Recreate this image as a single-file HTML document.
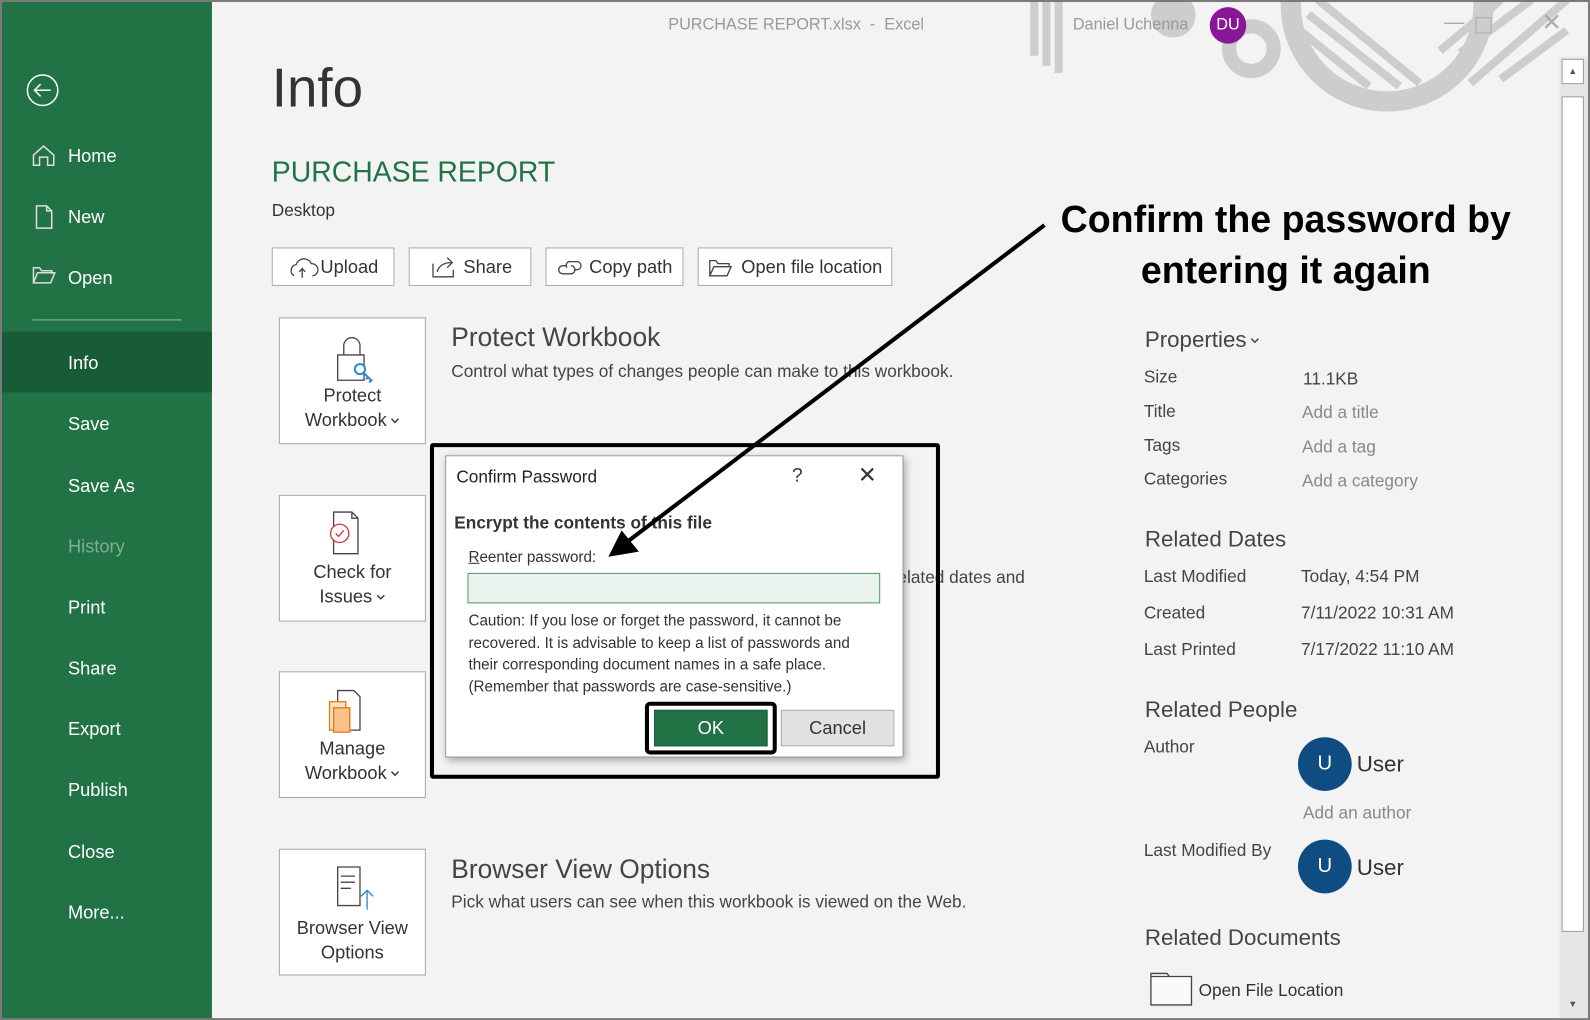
<!DOCTYPE html>
<html><head><meta charset="utf-8"><style>
html,body{margin:0;padding:0;width:1590px;height:1020px;overflow:hidden;background:#f3f3f3}
#w{position:absolute;left:0;top:0;width:1568px;height:1006px;transform:scale(1.01403);transform-origin:0 0;font-family:"Liberation Sans",sans-serif;background:#f3f3f3}
.a{position:absolute;white-space:nowrap;line-height:1}
.side{position:absolute;left:0;top:0;width:209px;height:1006px;background:#217346}
.si{position:absolute;left:67px;color:#fff;font-size:18px;line-height:1}
.btn{position:absolute;top:244px;height:38px;background:#fff;border:1px solid #ababab;box-sizing:border-box;font-size:18px;color:#333;line-height:36px}
.tile{position:absolute;left:275px;width:145px;height:125px;background:#fff;border:1px solid #a6a6a6;box-sizing:border-box;text-align:center;font-size:18px;color:#333}
.tile .t{position:absolute;left:0;right:0;line-height:24px}
.h{font-size:26px;color:#444}
.d{font-size:17px;color:#444}
.pl{font-size:17px;color:#444}
.pv{font-size:17px;color:#444}
.gr{color:#888}
.cv{display:inline-block;width:9px;height:6px;margin-left:4px;vertical-align:middle}
</style></head><body><div id="w">
<svg style="position:absolute;left:0;top:0" width="1568" height="1006">
<g fill="none" stroke="#cdcdcd">
<circle cx="1368" cy="5" r="95" stroke-width="20"/>
<circle cx="1234" cy="48" r="22" stroke-width="14"/>
</g>
<circle cx="1157" cy="15" r="22" fill="#cdcdcd"/>
<g stroke="#cdcdcd" stroke-width="8">
<line x1="1300" y1="0" x2="1400" y2="82"/><line x1="1290" y1="14" x2="1380" y2="85"/><line x1="1282" y1="30" x2="1350" y2="85"/>
<line x1="1480" y1="0" x2="1420" y2="50"/><line x1="1510" y1="0" x2="1440" y2="52"/><line x1="1545" y1="0" x2="1450" y2="82"/><line x1="1545" y1="30" x2="1480" y2="78"/>
<line x1="1020" y1="0" x2="1020" y2="55"/><line x1="1032" y1="0" x2="1032" y2="65"/><line x1="1044" y1="0" x2="1044" y2="72"/>
</g>
</svg>
<div class="side"></div>
<div style="position:absolute;left:0;top:327px;width:209px;height:60px;background:#185c37"></div>
<svg style="position:absolute;left:0;top:0" width="209" height="300" fill="none" stroke="#fff" stroke-width="1.5">
<circle cx="42" cy="89" r="15"/><path d="M34 89h16M40 83l-6 6 6 6"/>
<g stroke="#ddd"><path d="M33 163v-10l10-9 10 9v10h-6v-8h-8v8z"/><path d="M36 203h10l5 5v17h-15z M46 203v5h5"/><path d="M33 279v-15h6l2 3h10v3 M33 279l4-10h17l-4 10z"/></g>
</svg>
<div class="si" style="top:145px">Home</div>
<div class="si" style="top:205px">New</div>
<div class="si" style="top:265px">Open</div>
<div style="position:absolute;left:32px;top:315px;width:147px;height:1px;background:#8fb8a0"></div>
<div class="si" style="top:349px">Info</div>
<div class="si" style="top:409px">Save</div>
<div class="si" style="top:470px">Save As</div>
<div class="si" style="top:530px;color:#7fae93">History</div>
<div class="si" style="top:590px">Print</div>
<div class="si" style="top:650px">Share</div>
<div class="si" style="top:710px">Export</div>
<div class="si" style="top:770px">Publish</div>
<div class="si" style="top:831px">Close</div>
<div class="si" style="top:891px">More...</div>
<svg style="position:absolute;left:0;top:0" width="1568" height="1006"><rect x="1" y="1" width="1566" height="1004" fill="none" stroke="#7a7a7a" stroke-width="2"/></svg>

<div class="a" style="left:659px;top:17px;font-size:16px;color:#999">PURCHASE REPORT.xlsx &nbsp;-&nbsp; Excel</div>
<div class="a" style="left:1058px;top:17px;font-size:16px;color:#999">Daniel Uchenna</div>
<div class="a" style="left:1193px;top:7px;width:36px;height:36px;border-radius:50%;background:#881798;color:#fff;font-size:16px;line-height:36px;text-align:center">DU</div>
<div class="a" style="left:1424px;top:12px;font-size:20px;color:#aaa">—</div>
<div class="a" style="left:1455px;top:17px;width:14px;height:14px;border:1.5px solid #aaa"></div>
<div class="a" style="left:1520px;top:11px;font-size:24px;color:#aaa">✕</div>

<div class="a" style="left:268px;top:60px;font-size:54px;color:#333">Info</div>
<div class="a" style="left:268px;top:156px;font-size:28px;color:#217346">PURCHASE REPORT</div>
<div class="a" style="left:268px;top:199px;font-size:17px;color:#333">Desktop</div>

<div class="btn" style="left:268px;width:121px;padding-left:47px">Upload</div>
<div class="btn" style="left:403px;width:121px;padding-left:53px">Share</div>
<div class="btn" style="left:538px;width:136px;padding-left:42px">Copy path</div>
<div class="btn" style="left:688px;width:192px;padding-left:42px">Open file location</div>
<svg style="position:absolute;left:0;top:0" width="900" height="300" fill="none" stroke="#444" stroke-width="1.3">
<path d="M290 272a6 6 0 0 1 2-11a8 8 0 0 1 15-1a5 5 0 0 1 1 12M298 274v-9l-3 3M298 265l3 3"/>
<path d="M427 260v13h20v-7M431 268c2-6 7-9 14-9M441 254l5 5-5 5"/>
<path d="M558 262h-3a4 4 0 0 0 0 8h8a4 4 0 0 0 0-8M566 266h3a4 4 0 0 0 0-8h-8a4 4 0 0 0-2 6"/>
<path d="M700 272v-15h6l2 3h11v3M700 272l4-9h17l-4 9z"/>
</svg>

<div class="tile" style="top:313px"><div class="t" style="top:64px">Protect<br>Workbook<svg class="cv" viewBox="0 0 9 6"><path d="M1 1l3.5 3.5L8 1" fill="none" stroke="#333" stroke-width="1.4"/></svg></div></div>
<div class="tile" style="top:488px"><div class="t" style="top:63px">Check for<br>Issues<svg class="cv" viewBox="0 0 9 6"><path d="M1 1l3.5 3.5L8 1" fill="none" stroke="#333" stroke-width="1.4"/></svg></div></div>
<div class="tile" style="top:662px"><div class="t" style="top:63px">Manage<br>Workbook<svg class="cv" viewBox="0 0 9 6"><path d="M1 1l3.5 3.5L8 1" fill="none" stroke="#333" stroke-width="1.4"/></svg></div></div>
<div class="tile" style="top:837px"><div class="t" style="top:65px">Browser View<br>Options</div></div>
<svg style="position:absolute;left:0;top:0" width="420" height="960" fill="none" stroke="#444" stroke-width="1.3">
<path d="M339 350v-9a8 8 0 0 1 16 0v9M333 350h26v25h-26z"/>
<g stroke="#2a8ad4" stroke-width="2"><circle cx="355" cy="364" r="5" fill="#fff"/><path d="M359 368l8 8M363 372l-2 2M366 375l-2 2"/></g>
<path d="M329 505h18l6 6v35h-24z M347 505v6h6"/>
<circle cx="335" cy="526" r="9" stroke="#d13438" fill="#fff"/><path d="M331 526l3 3 5-6" stroke="#d13438"/>
<path d="M333 681h16l6 6v33h-22z"/>
<rect x="325" y="692" width="16" height="28" fill="#fbe2c5" stroke="#e07a1a"/>
<rect x="329" y="698" width="16" height="24" fill="#fbc28a" stroke="#e07a1a"/>
<path d="M333 855h22v38h-22z M336 864h14M336 870h14M336 876h10"/>
<path d="M362 897v-18M356 884l6-6 6 6" stroke="#2a8ad4"/>
</svg>

<div class="a h" style="left:445px;top:319px">Protect Workbook</div>
<div class="a d" style="left:445px;top:358px">Control what types of changes people can make to this workbook.</div>
<div class="a d" style="left:885px;top:561px">elated dates and</div>
<div class="a h" style="left:445px;top:844px">Browser View Options</div>
<div class="a d" style="left:445px;top:881px">Pick what users can see when this workbook is viewed on the Web.</div>

<div class="a" style="left:1129px;top:324px;font-size:22px;color:#444">Properties<svg class="cv" viewBox="0 0 9 6"><path d="M1 1l3.5 3.5L8 1" fill="none" stroke="#444" stroke-width="1.4"/></svg></div>
<div class="a pl" style="left:1128px;top:363px">Size</div><div class="a pv" style="left:1285px;top:365px">11.1KB</div>
<div class="a pl" style="left:1128px;top:397px">Title</div><div class="a pv gr" style="left:1284px;top:398px">Add a title</div>
<div class="a pl" style="left:1128px;top:431px">Tags</div><div class="a pv gr" style="left:1284px;top:432px">Add a tag</div>
<div class="a pl" style="left:1128px;top:464px">Categories</div><div class="a pv gr" style="left:1284px;top:466px">Add a category</div>
<div class="a" style="left:1129px;top:521px;font-size:22px;color:#444">Related Dates</div>
<div class="a pl" style="left:1128px;top:560px">Last Modified</div><div class="a pv" style="left:1283px;top:560px">Today, 4:54 PM</div>
<div class="a pl" style="left:1128px;top:596px">Created</div><div class="a pv" style="left:1283px;top:596px">7/11/2022 10:31 AM</div>
<div class="a pl" style="left:1128px;top:632px">Last Printed</div><div class="a pv" style="left:1283px;top:632px">7/17/2022 11:10 AM</div>
<div class="a" style="left:1129px;top:689px;font-size:22px;color:#444">Related People</div>
<div class="a pl" style="left:1128px;top:728px">Author</div>
<div class="a" style="left:1280px;top:727px;width:53px;height:53px;border-radius:50%;background:#0f4c81;color:#fff;font-size:20px;line-height:53px;text-align:center">U</div>
<div class="a" style="left:1338px;top:743px;font-size:22px;color:#333">User</div>
<div class="a pv gr" style="left:1285px;top:793px">Add an author</div>
<div class="a pl" style="left:1128px;top:830px">Last Modified By</div>
<div class="a" style="left:1280px;top:828px;width:53px;height:53px;border-radius:50%;background:#0f4c81;color:#fff;font-size:20px;line-height:53px;text-align:center">U</div>
<div class="a" style="left:1338px;top:845px;font-size:22px;color:#333">User</div>
<div class="a" style="left:1129px;top:914px;font-size:22px;color:#444">Related Documents</div>
<svg style="position:absolute;left:1133px;top:956px" width="46" height="38" fill="#fafafa" stroke="#444" stroke-width="1.3"><path d="M2 4h16l2 3h22v28h-40z M2 7h18"/></svg>
<div class="a d" style="left:1182px;top:968px;color:#333">Open File Location</div>

<div style="position:absolute;left:1538px;top:56px;width:28px;height:948px;background:#e6e6e6"></div>
<div style="position:absolute;left:1540px;top:58px;width:22px;height:25px;background:#fff;border:1px solid #999;box-sizing:border-box;text-align:center;font-size:9px;line-height:23px;color:#555">▲</div>
<div style="position:absolute;left:1540px;top:95px;width:22px;height:824px;background:#fff;border:1px solid #999;box-sizing:border-box"></div>
<div style="position:absolute;left:1540px;top:980px;width:22px;height:20px;text-align:center;font-size:9px;line-height:20px;color:#555">▼</div>

<div style="position:absolute;left:424px;top:437px;width:503px;height:331px;border:4px solid #000;border-radius:3px;box-sizing:border-box"></div>
<div style="position:absolute;left:439px;top:449px;width:452px;height:298px;background:#fff;border:1px solid #9a9a9a;box-sizing:border-box;box-shadow:2px 3px 8px rgba(0,0,0,.35)"></div>
<div class="a" style="left:450px;top:462px;font-size:17px;color:#222">Confirm Password</div>
<div class="a" style="left:781px;top:460px;font-size:19px;color:#333">?</div>
<div class="a" style="left:846px;top:458px;font-size:22px;color:#333">✕</div>
<div class="a" style="left:448px;top:507px;font-size:17px;font-weight:bold;color:#333">Encrypt the contents of this file</div>
<div class="a" style="left:462px;top:542px;font-size:15px;color:#333"><u>R</u>eenter password:</div>
<div class="a" style="left:461px;top:565px;width:407px;height:30px;background:#eaf3ee;border:1px solid #4f9a6a;box-sizing:border-box"></div>
<div class="a" style="left:462px;top:602px;font-size:15px;color:#333;line-height:21.5px">Caution: If you lose or forget the password, it cannot be<br>recovered. It is advisable to keep a list of passwords and<br>their corresponding document names in a safe place.<br>(Remember that passwords are case-sensitive.)</div>
<div style="position:absolute;left:636px;top:692px;width:130px;height:52px;border:4px solid #000;border-radius:5px;box-sizing:border-box"></div>
<div class="a" style="left:645px;top:700px;width:112px;height:36px;background:#217346;border:1px solid #1a5c37;box-sizing:border-box;color:#fff;font-size:18px;line-height:34px;text-align:center">OK</div>
<div class="a" style="left:770px;top:700px;width:112px;height:36px;background:#e1e1e1;border:1px solid #adadad;box-sizing:border-box;color:#333;font-size:18px;line-height:34px;text-align:center">Cancel</div>

<svg style="position:absolute;left:0;top:0" width="1568" height="1006">
<line x1="1030" y1="222" x2="615" y2="537" stroke="#000" stroke-width="4"/>
<polygon points="600,549 613,523 630,544" fill="#000"/>
</svg>
<div class="a" style="left:1000px;top:192px;width:536px;text-align:center;font-size:37px;font-weight:bold;color:#000;line-height:50px;white-space:normal">Confirm the password by<br>entering it again</div>
</div></body></html>
